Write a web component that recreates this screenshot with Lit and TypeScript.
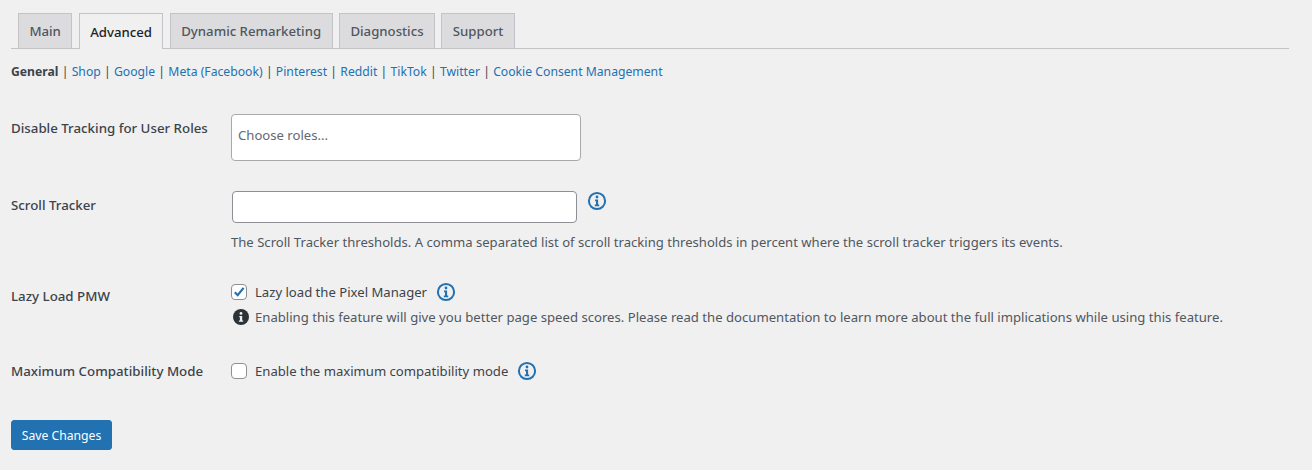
import { LitElement, html, css } from "lit";
import { customElement } from "lit/decorators.js";

const infoOutline = html`<svg class="info" viewBox="0 0 20 20" aria-hidden="true">
  <circle cx="10" cy="10" r="8.1" fill="none" stroke="#2271b1" stroke-width="2"></circle>
  <circle cx="10" cy="6" r="1.4" fill="#2271b1"></circle>
  <path d="M8 8.6h3.1v5h1.1v1.6H7.8v-1.6h1.2v-3.4H8z" fill="#2271b1"></path>
</svg>`;

const infoSolid = html`<svg class="solid" viewBox="0 0 16 16" aria-hidden="true">
  <circle cx="8" cy="8" r="8" fill="#2c3338"></circle>
  <circle cx="8" cy="4.4" r="1.4" fill="#f0f0f1"></circle>
  <path d="M6.3 6.9h2.9v4.6h1v1.3H5.9v-1.3h1V8.2h-.6z" fill="#f0f0f1"></path>
</svg>`;

@customElement("app-root")
export class AppRoot extends LitElement {
  static styles = css`
    :host {
      display: block;
      width: 1312px;
      height: 470px;
      box-sizing: border-box;
      background: #f0f0f1;
      padding: 13px 23px 0 11px;
      font-family: "Noto Sans", "Open Sans", sans-serif;
      font-size: 13.12px;
      line-height: 18px;
      color: #3c434a;
      overflow: hidden;
    }
    .tabs {
      display: flex;
      height: 35px;
      padding-left: 7px;
      gap: 6.5px;
      border-bottom: 1px solid #c3c4c7;
    }
    .tab {
      box-sizing: border-box;
      height: 35px;
      padding: 0 10.4px;
      display: flex;
      align-items: center;
      border: 1px solid #c3c4c7;
      border-bottom: none;
      background: #dcdcde;
      color: #50575e;
      font-size: 13.2px;
      font-weight: 500;
    }
    .tab.active {
      background: #f0f0f1;
      color: #1d2327;
      height: 36px;
    }
    .subnav {
      margin-top: 14px;
      height: 18px;
      display: flex;
      gap: 3.25px;
      white-space: pre;
      font-size: 12.2px;
    }
    .subnav b { font-weight: 700; color: #3c434a; }
    .subnav a { color: #2271b1; text-decoration: none; }
    .row {
      display: grid;
      grid-template-columns: 220px 1fr;
    }
    .label {
      font-weight: 500;
      color: #3c434a;
      font-size: 13.3px;
    }
    .r1 { margin-top: 33px; height: 47px; }
    .r1 .label { padding-top: 5px; }
    .select {
      box-sizing: border-box;
      width: 350px;
      height: 47px;
      background: #fff;
      border: 1px solid #a7aaad;
      border-radius: 4px;
      padding: 11px 6px;
      color: #646970;
    }
    .r2 { margin-top: 30px; }
    .r2 .label { padding-top: 5px; }
    .inline { display: flex; align-items: flex-start; }
    .input {
      box-sizing: border-box;
      width: 345px;
      height: 32px;
      margin-left: 1px;
      background: #fff;
      border: 1px solid #8c8f94;
      border-radius: 4px;
    }
    .info { width: 20px; height: 20px; flex: none; display: block; }
    .r2 .info { margin-left: 10px; }
    .desc { margin-top: 10px; color: #50575e; font-size: 13.1px; }
    .r3 { margin-top: 30px; }
    .r3 .label { padding-top: 6px; }
    .check {
      display: flex;
      align-items: center;
      height: 22px;
    }
    .box {
      box-sizing: border-box;
      width: 16px;
      height: 16px;
      flex: none;
      background: #fff;
      border: 1px solid #8c8f94;
      border-radius: 4px;
      margin-right: 8px;
      display: block;
    }
    .box svg { display: block; width: 14px; height: 14px; }
    .check .info { margin-left: 9px; }
    .note { display: flex; align-items: center; margin-top: 5px; color: #50575e; font-size: 13.13px; }
    .solid { width: 16px; height: 16px; flex: none; margin: 0 6px 0 2px; }
    .r4 { margin-top: 34px; }
    .r4 .label { padding-top: 2px; }
    .save {
      box-sizing: border-box;
      display: flex;
      align-items: center;
      justify-content: center;
      margin-top: 38px;
      width: 101px;
      height: 30px;
      background: #2271b1;
      color: #fff;
      border: 1px solid #2271b1;
      border-radius: 3px;
      font: inherit;
      font-size: 12.2px;
      padding: 1px 0 0;
    }
  `;

  render() {
    const links = ["Shop", "Google", "Meta (Facebook)", "Pinterest", "Reddit", "TikTok", "Twitter", "Cookie Consent Management"];
    const tabs = ["Main", "Advanced", "Dynamic Remarketing", "Diagnostics", "Support"];
    return html`
      <div class="tabs">
        ${tabs.map((t) => html`<div class="tab ${t === "Advanced" ? "active" : ""}">${t}</div>`)}
      </div>
      <div class="subnav"><b>General</b>${links.map((l) => html`<span>|</span><a href="#">${l}</a>`)}</div>

      <div class="row r1">
        <div class="label">Disable Tracking for User Roles</div>
        <div class="select">Choose roles...</div>
      </div>

      <div class="row r2">
        <div class="label">Scroll Tracker</div>
        <div>
          <div class="inline"><div class="input"></div>${infoOutline}</div>
          <div class="desc">The Scroll Tracker thresholds. A comma separated list of scroll tracking thresholds in percent where the scroll tracker triggers its events.</div>
        </div>
      </div>

      <div class="row r3">
        <div class="label">Lazy Load PMW</div>
        <div>
          <div class="check">
            <span class="box"><svg viewBox="0 0 14 14"><path d="M2.8 7.2l2.9 3L11.6 2.9" fill="none" stroke="#2271b1" stroke-width="2.2"></path></svg></span>
            Lazy load the Pixel Manager ${infoOutline}
          </div>
          <div class="note">${infoSolid}Enabling this feature will give you better page speed scores. Please read the documentation to learn more about the full implications while using this feature.</div>
        </div>
      </div>

      <div class="row r4">
        <div class="label">Maximum Compatibility Mode</div>
        <div class="check"><span class="box"></span>Enable the maximum compatibility mode ${infoOutline}</div>
      </div>

      <button class="save">Save Changes</button>
    `;
  }
}
